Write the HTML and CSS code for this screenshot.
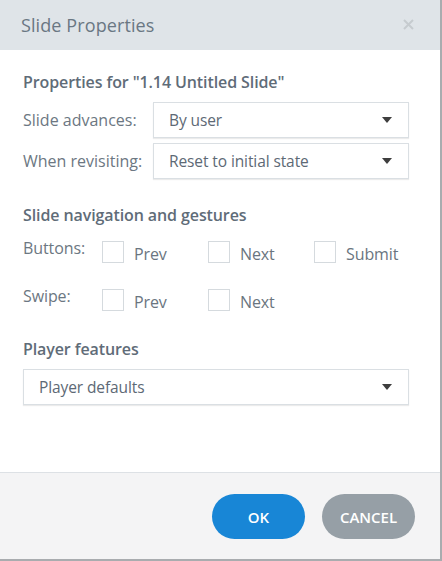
FILE: index.html
```html
<!DOCTYPE html>
<html>
<head>
<meta charset="utf-8">
<link rel="stylesheet" href="styles.css">
</head>
<body>
<div class="dialog">
  <div class="header">
    <span class="title">Slide Properties</span>
    <svg class="close" width="11" height="11" viewBox="0 0 11 11"><path d="M1 1L10 10M10 1L1 10" stroke="#c6cbcf" stroke-width="2" fill="none"/></svg>
  </div>
  <div class="content">
    <div class="section-title first">Properties for "1.14 Untitled Slide"</div>
    <div class="form-row">
      <span class="label">Slide advances:</span>
      <div class="select"><span>By user</span><span class="caret"></span></div>
    </div>
    <div class="form-row second">
      <span class="label">When revisiting:</span>
      <div class="select"><span>Reset to initial state</span><span class="caret"></span></div>
    </div>

    <div class="section-title nav">Slide navigation and gestures</div>
    <div class="check-row">
      <span class="check-label">Buttons:</span>
      <label class="check"><span class="box"></span><span>Prev</span></label>
      <label class="check"><span class="box"></span><span>Next</span></label>
      <label class="check"><span class="box"></span><span>Submit</span></label>
    </div>
    <div class="check-row swipe">
      <span class="check-label">Swipe:</span>
      <label class="check"><span class="box"></span><span>Prev</span></label>
      <label class="check"><span class="box"></span><span>Next</span></label>
    </div>

    <div class="section-title player">Player features</div>
    <div class="select wide"><span>Player defaults</span><span class="caret"></span></div>
  </div>
  <div class="footer">
    <button class="btn ok">OK</button>
    <button class="btn cancel">CANCEL</button>
  </div>
</div>
</body>
</html>
```

FILE: styles.css
```css
* { box-sizing: border-box; }
html, body { margin: 0; padding: 0; background: #ffffff; }
body {
  font-family: "Open Sans", "Noto Sans", sans-serif;
  width: 442px;
  height: 561px;
  overflow: hidden;
}
.dialog {
  width: 442px;
  height: 561px;
  border-right: 2px solid #a9acaf;
  border-bottom: 2px solid #a9acaf;
  display: flex;
  flex-direction: column;
  background: #fff;
}
.header {
  height: 50px;
  background: #dfe4e8;
  display: flex;
  align-items: center;
  justify-content: space-between;
  padding: 0 26px 0 21px;
}
.title {
  font-size: 18px;
  color: #6a7783;
  letter-spacing: 0.1px;
}
.close {
  display: block;
  margin-top: -2px;
}
.content {
  flex: 1;
  padding: 0 31px 0 23px;
  display: flex;
  flex-direction: column;
}
.section-title {
  font-size: 16px;
  font-weight: 600;
  color: #5f6c78;
  line-height: 20px;
  letter-spacing: -0.1px;
}
.section-title.first { margin-top: 22px; }
.form-row {
  display: flex;
  align-items: center;
  margin-top: 10px;
}
.form-row.second { margin-top: 5px; }
.label {
  width: 130px;
  flex-shrink: 0;
  font-size: 16px;
  color: #6c7782;
  letter-spacing: 0;
}
.select {
  flex: 1;
  height: 36px;
  border: 1px solid #dadfe3;
  box-shadow: 0 1px 1px rgba(0,0,0,0.08);
  display: flex;
  align-items: center;
  justify-content: space-between;
  padding: 0 16px 0 15px;
  font-size: 15.5px;
  color: #5d6975;
  letter-spacing: -0.1px;
}
.caret {
  width: 0;
  height: 0;
  border-left: 5px solid transparent;
  border-right: 5px solid transparent;
  border-top: 6px solid #3e3e3e;
}
.section-title.nav { margin-top: 26px; }
.check-row {
  display: flex;
  align-items: center;
  margin-top: 16px;
  height: 22px;
}
.check-row.swipe { margin-top: 26px; }
.check-label {
  width: 79px;
  flex-shrink: 0;
  font-size: 16px;
  color: #6c7782;
  letter-spacing: -0.1px;
  align-self: flex-start;
  margin-top: -4px;
}
.check {
  display: flex;
  align-items: center;
  width: 106px;
  flex-shrink: 0;
  font-size: 16px;
  color: #6a7580;
  letter-spacing: -0.1px;
}
.check span:last-child { margin-top: 4px; }
.box {
  width: 22px;
  height: 22px;
  border: 1px solid #d5dade;
  margin-right: 10px;
  background: #fff;
}
.section-title.player { margin-top: 28px; }
.select.wide { flex: none; margin-top: 10px; }
.footer {
  height: 87px;
  border-top: 1px solid #dde1e5;
  background: #f4f4f5;
  display: flex;
  justify-content: flex-end;
  align-items: flex-start;
  padding: 21px 25px 0 0;
  gap: 17px;
}
.btn {
  width: 93px;
  height: 45px;
  border-radius: 23px;
  border: none;
  font-family: "Open Sans", "Noto Sans", sans-serif;
  font-size: 15px;
  font-weight: 600;
  color: #fff;
  letter-spacing: 0;
}
.btn.ok { background: #1886d6; }
.btn.cancel { background: #969fa6; }
```
